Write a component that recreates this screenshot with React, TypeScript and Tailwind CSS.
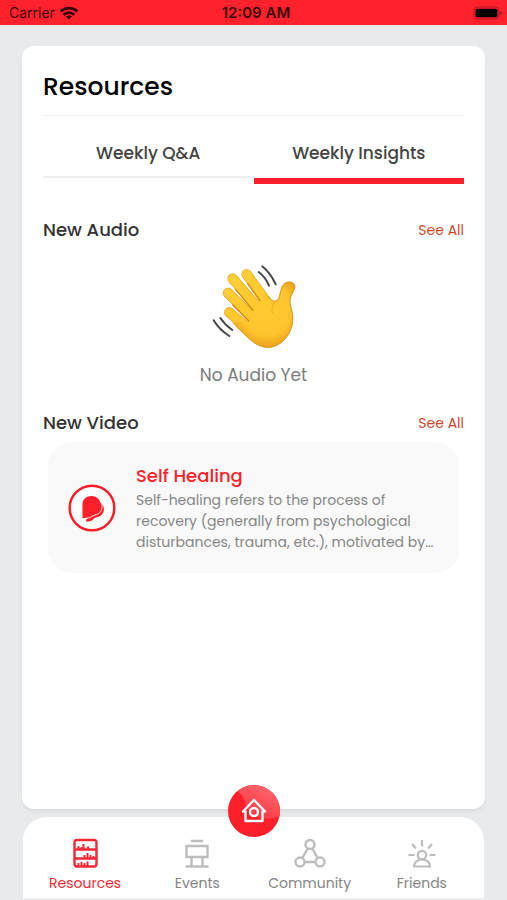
import type { ReactNode } from "react";
import { clsx } from "clsx";

function WifiIcon() {
  return (
    <svg viewBox="0 0 20 14" className="h-[14px] w-5" fill="none" stroke="currentColor" strokeWidth="2.7" aria-hidden="true">
      <path d="M1.6 5.4C6.3 0.9 13.7 0.9 18.4 5.4" />
      <path d="M4.6 8.8C7.6 5.9 12.4 5.9 15.4 8.8" />
      <path d="M10 13.6L6.9 10.6C8.7 9 11.3 9 13.1 10.6Z" fill="currentColor" stroke="none" />
    </svg>
  );
}

function BatteryIcon() {
  return (
    <svg viewBox="0 0 30 14" className="h-[14px] w-[30px]" aria-hidden="true">
      <rect x="1" y="1" width="25" height="12" rx="3.5" fill="none" stroke="#b0141d" strokeWidth="1" />
      <rect x="2.5" y="2.700" width="22" height="8.600" rx="2" fill="#000" />
      <path d="M27.5 5v4c1.6-.6 1.6-3.4 0-4Z" fill="#7c1018" />
    </svg>
  );
}

function WavingHand() {
  const fingers = [
    "M173 73L236 160",
    "M131 86L215 182",
    "M117 129L205 215",
    "M121 187L200 255",
  ];

  return (
    <svg viewBox="63 42 264 255" className="h-[85px] w-[88px]" fill="none" strokeLinecap="round" aria-hidden="true">
      <defs>
        <linearGradient id="skin" gradientUnits="userSpaceOnUse" x1="150" y1="70" x2="250" y2="290">
          <stop offset="0" stopColor="#ffcf35" />
          <stop offset="0.7" stopColor="#ffc42b" />
          <stop offset="1" stopColor="#ee9f1a" />
        </linearGradient>
        <radialGradient id="palm" gradientUnits="userSpaceOnUse" cx="232" cy="180" r="125">
          <stop offset="0" stopColor="#ffcb32" />
          <stop offset="0.6" stopColor="#ffc42b" />
          <stop offset="1" stopColor="#e6971a" />
        </radialGradient>
      </defs>
      {fingers.map((d) => (
        <g key={d}>
          <path d={d} stroke="#dd9418" strokeWidth="31" />
          <path d={d} stroke="url(#skin)" strokeWidth="28" />
        </g>
      ))}
      <path
        d="M232 130C240 143 249 154 258 154C277 151 270 116 286 101C300 90 322 98 317 114C313 129 302 139 303 155C304 173 313 187 311 213C309 247 285 282 249 291C219 297 196 281 175 261L130 218L178 213L191 182L212 153Z"
        fill="url(#palm)"
      />
      <path
        d="M238 139C245 149 252 154 258 154C277 151 270 116 286 101C300 90 322 98 317 114C313 129 302 139 303 155C304 173 313 187 311 213C309 247 285 282 249 291C219 297 196 281 175 261L140 227"
        stroke="#dc9115"
        strokeWidth="3"
      />
      <path d="M176 101L213 152M140 119L192 181M131 165L179 213" stroke="#d18a14" strokeWidth="4" />
      <path d="M259 156C249 166 246 176 251 189" stroke="#edaa20" strokeWidth="3" />
      <g stroke="#45474b" strokeWidth="6">
        <path d="M220 49Q245 70 260 103" />
        <path d="M209 66Q230 82 240 107" />
        <path d="M94 204Q108 225 130 240" />
        <path d="M74 211Q91 240 121 258" />
      </g>
    </svg>
  );
}

function VideoMark() {
  return (
    <svg viewBox="0 0 48 48" className="size-12 shrink-0" aria-hidden="true">
      <circle cx="24" cy="24" r="22.3" fill="#fff" stroke="#fd1f2a" strokeWidth="2.5" />
      <path d="M14.500 34.500V20.500C14.500 15 18.500 12 23.500 12C28.500 12 32 15.500 32.500 19C37 21.500 37 28 33 31.500C30.500 33.500 27.500 33 26 34.500C24.500 37 21.500 37.500 19 37.500C17 37.500 18.500 35 19.500 34Z" fill="#fd1f2a" />
      <path d="M33.800 20C35 27 31.500 29.500 28.500 30.500C24.500 31.500 23 33.500 20.500 33.900L14 35" fill="none" stroke="#fff" strokeWidth="0.900" />
    </svg>
  );
}

function ResourcesIcon() {
  return (
    <svg viewBox="0 0 32 32" className="size-8" fill="none" stroke="currentColor" strokeWidth="2.400" aria-hidden="true">
      <rect x="5.500" y="3" width="22" height="26.500" rx="2.500" />
      <path d="M6 12.500H27M6 21.500H27" />
      <path d="M9.500 9v3M12.500 10v2M14.500 7v5M18.500 9.500L20 12M15.500 18v3M18.500 16v5M21.500 18v3M24.500 19v2M9.500 26v3M12.500 25v4M15.500 26v3M18.500 24.500v4.500" strokeWidth="2" />
    </svg>
  );
}

function EventsIcon() {
  return (
    <svg viewBox="0 0 32 32" className="size-8" fill="none" stroke="currentColor" strokeWidth="2.400" aria-hidden="true">
      <path d="M10 4H22M5.500 9H26.500V20H5.500ZM10.500 20V29.500M21.500 20V29.500M4.500 29.500H27.500" />
    </svg>
  );
}

function CommunityIcon() {
  return (
    <svg viewBox="0 0 32 32" className="size-8" fill="none" stroke="currentColor" strokeWidth="2.400" aria-hidden="true">
      <circle cx="16" cy="7.500" r="4.500" />
      <circle cx="6" cy="25" r="4.500" />
      <circle cx="26" cy="25" r="4.500" />
      <path d="M13.700 11.500L8.300 21M18.300 11.500L23.700 21M10.500 25H21.500" />
    </svg>
  );
}

function FriendsIcon() {
  return (
    <svg viewBox="0 0 32 32" className="size-8" fill="none" stroke="currentColor" strokeWidth="2.200" aria-hidden="true">
      <circle cx="16" cy="18" r="4.200" />
      <path d="M8 29.500C8.500 25 11.500 22.500 16 22.500S23.500 25 24 29.500ZM16 3V9.500M6 7L10 11.500M26 7L22 11.500M2.500 18H8.500M23.500 18H29.500" />
    </svg>
  );
}

function HomeIcon() {
  return (
    <svg viewBox="0 0 52 52" className="size-[52px]" aria-hidden="true">
      <defs>
        <linearGradient id="shine" x1="0.900" y1="0" x2="0.300" y2="0.900">
          <stop offset="0" stopColor="#ff6d74" />
          <stop offset="1" stopColor="#ff3540" />
        </linearGradient>
      </defs>
      <circle cx="26" cy="26" r="26" fill="#fd1f2a" />
      <path d="M9 6.500A26 26 0 0 1 51.500 31C39 37 20 33 17 17C15.500 11 12.500 8 9 6.500Z" fill="url(#shine)" />
      <path d="M15 26.500L26 15L37 26.500H34.500V36H17.500V26.500Z" fill="none" stroke="#fff" strokeWidth="2.400" strokeLinejoin="round" />
      <circle cx="26" cy="27" r="4" fill="none" stroke="#fff" strokeWidth="2.400" />
    </svg>
  );
}

function SectionHeader({ title }: { title: string }) {
  return (
    <div className="flex h-7 items-center justify-between">
      <h2 className="text-lg font-medium text-[#333333]">{title}</h2>
      <a href="#all" className="text-sm text-[#cf4a2c]">See All</a>
    </div>
  );
}

interface NavItemProps {
  label: string;
  icon: ReactNode;
  active?: boolean;
}

function NavItem({ label, icon, active = false }: NavItemProps) {
  return (
    <a
      href={`#${label.toLowerCase()}`}
      className={clsx("flex flex-1 flex-col items-center gap-1", active ? "text-[#f52833]" : "text-[#bdbdbd]")}
    >
      {icon}
      <span className={clsx("text-sm", !active && "text-[#858585]")}>{label}</span>
    </a>
  );
}

export default function App() {
  return (
    <div className="flex min-h-screen flex-col bg-[#e9eaec] font-['Poppins','Inter',sans-serif]">
      <header className="grid h-[25px] grid-cols-3 items-center bg-[#ff212b] pr-1 pl-[9px] font-['Inter',sans-serif] text-sm text-[#3b0508]">
        <div className="flex items-center gap-1">
          <span>Carrier</span>
          <WifiIcon />
        </div>
        <span className="text-center text-[15px] font-semibold">12:09 AM</span>
        <div className="flex justify-end">
          <BatteryIcon />
        </div>
      </header>

      <main className="mx-[22px] mt-[21px] mb-2 flex-1 rounded-xl bg-white px-[21px] shadow-md shadow-black/5">
        <h1 className="border-b border-[#f1f1f1] pt-[25px] pb-3 text-[25px] leading-8 font-medium text-black">Resources</h1>

        <div role="tablist" className="grid grid-cols-2 pt-5 text-[17px] font-medium text-[#444444]">
          <button role="tab" aria-selected="false" className="flex h-12 items-start justify-center pt-[5px]">
            Weekly Q&amp;A
          </button>
          <button role="tab" aria-selected="true" className="flex h-12 items-start justify-center pt-[5px]">
            Weekly Insights
          </button>
          <div className="-mt-2 h-[2px] bg-[#eeeeee]" />
          <div className="-mt-[6px] h-[6px] bg-[#fd1f2a]" />
        </div>

        <section className="pt-8">
          <SectionHeader title="New Audio" />
          <div className="flex flex-col items-center gap-3 pt-5 pb-5">
            <WavingHand />
            <p className="text-[17px] leading-7 text-[#7d7d7d]">No Audio Yet</p>
          </div>
        </section>

        <section>
          <SectionHeader title="New Video" />
          <article className="mx-[5px] mt-[5px] flex items-center gap-5 rounded-3xl bg-[#f9f9f9] p-5">
            <VideoMark />
            <div className="min-w-0 flex-1">
              <h3 className="text-lg leading-7 font-medium text-[#fd1f2a]">Self Healing</h3>
              <p className="line-clamp-3 text-sm leading-[21px] text-[#868686]">
                Self-healing refers to the process of
                <br />
                recovery (generally from psychological
                <br />
                disturbances, trauma, etc.), motivated by…
              </p>
            </div>
          </article>
        </section>
      </main>

      <nav className="relative mx-[23px] flex rounded-t-3xl border-b-2 border-[#f0f0f1] bg-white px-[6px] pt-5 pb-[5px]">
        <NavItem label="Resources" icon={<ResourcesIcon />} active />
        <NavItem label="Events" icon={<EventsIcon />} />
        <NavItem label="Community" icon={<CommunityIcon />} />
        <NavItem label="Friends" icon={<FriendsIcon />} />
        <button aria-label="Home" className="absolute -top-8 left-1/2 -translate-x-1/2 rounded-full">
          <HomeIcon />
        </button>
      </nav>
    </div>
  );
}
